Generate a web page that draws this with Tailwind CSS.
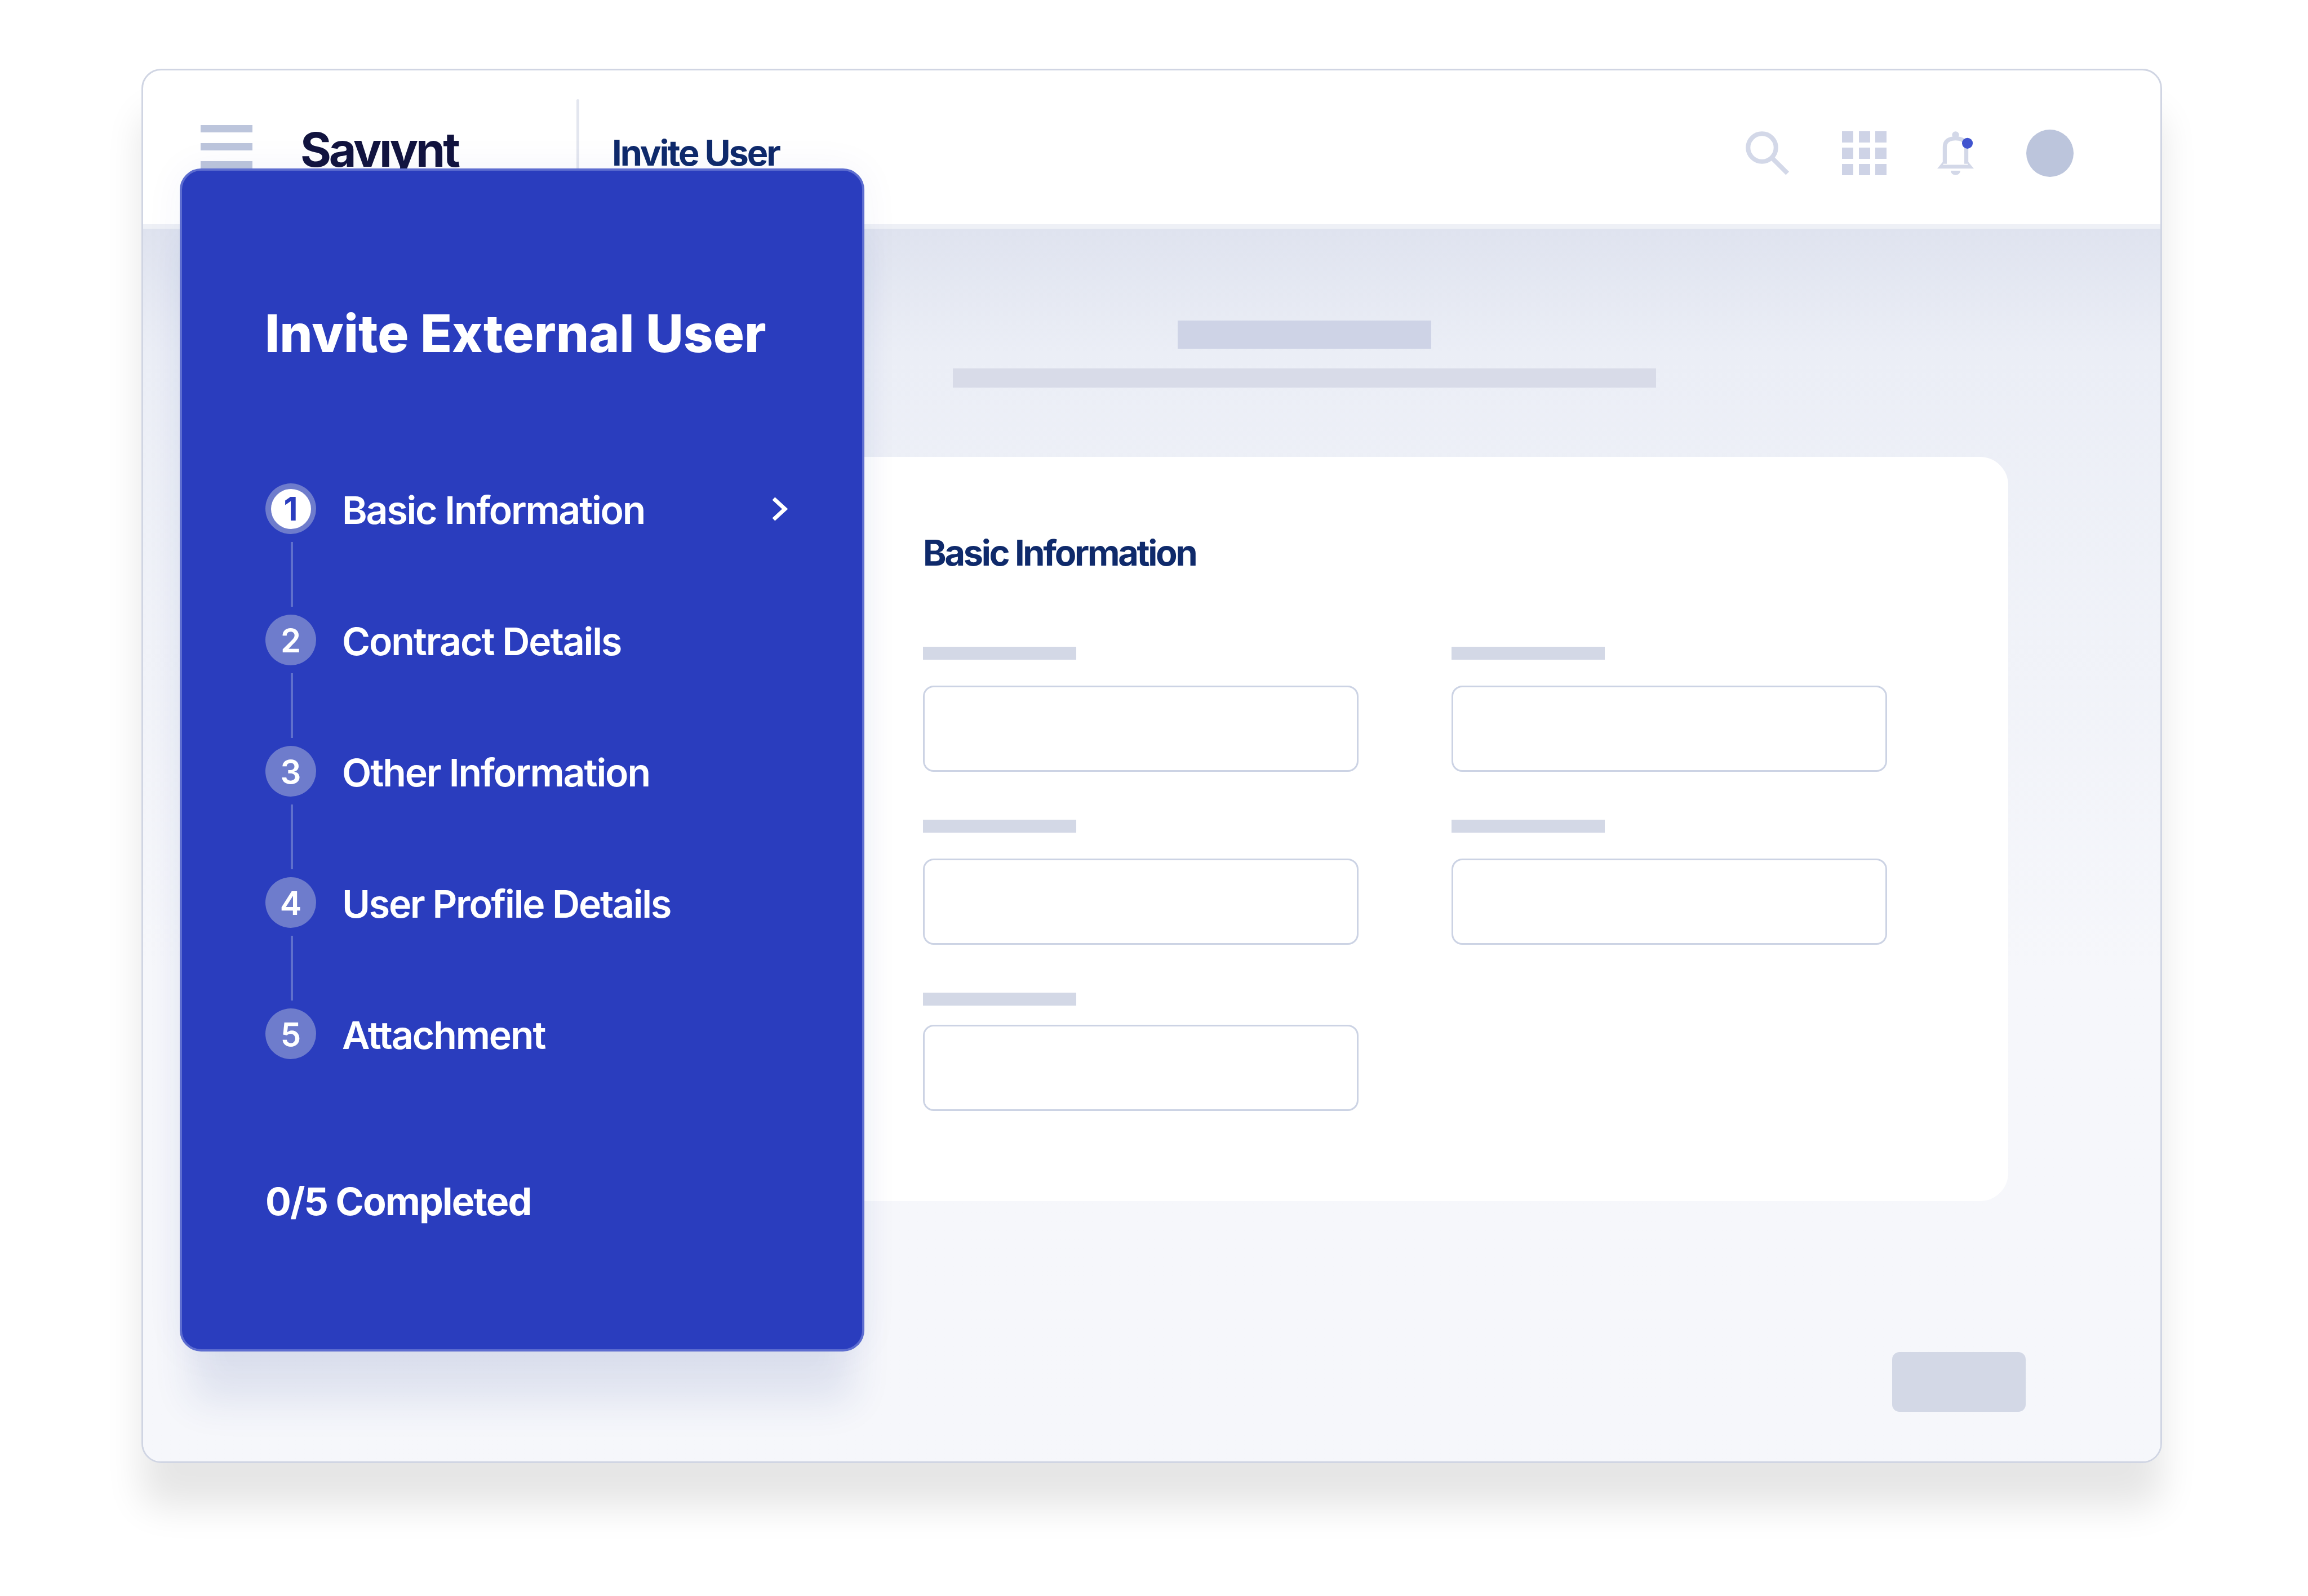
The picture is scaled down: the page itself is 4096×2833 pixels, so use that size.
<!DOCTYPE html>
<html lang="en">
<head>
    <meta charset="UTF-8">
    <title>Invite External User</title>
    <script src="https://cdn.jsdelivr.net/npm/@tailwindcss/browser@4"></script>
</head>
<body class="bg-white w-[4096px] h-[2833px] overflow-hidden pl-[251px] pt-[122px] font-['Inter',sans-serif]">
    <div class="relative w-[3586px] h-[2475px] border-[3px] border-[#d0d5e3] rounded-[35px] bg-white flex flex-col shadow-[0_78px_65px_0_rgba(0,0,0,0.1)]">

        <!-- top bar -->
        <header class="flex items-start h-[281px] shrink-0 pl-[102px] pr-[154px] border-b-[8px] border-[#eef0f6]">
            <div class="flex flex-col gap-[19px] w-[92px] mt-[97px]">
                <div class="h-[13px] bg-[#bcc5dc]"></div>
                <div class="h-[13px] bg-[#bcc5dc]"></div>
                <div class="h-[13px] bg-[#bcc5dc]"></div>
            </div>
            <div class="ml-[85px] w-[490px] mt-[99px] text-[84px] leading-[84px] font-bold tracking-[-0.05em] text-[#12143f]" aria-label="Saviynt">Savıynt</div>
            <div class="w-[5px] h-[230px] mt-[51px] bg-[#e3e6ef] rounded-full"></div>
            <div class="ml-[58px] mt-[115px] text-[63px] leading-[63px] font-bold tracking-[-0.048em] text-[#0f2a6b]">Invite User</div>

            <div class="ml-auto mt-[105px] h-[84px] flex items-center">
                <svg width="78" height="78" viewBox="0 0 82 81" fill="none" stroke="#d3d8e8" stroke-width="8.5">
                    <circle cx="30.5" cy="30" r="26"/>
                    <path d="M50 50 L78 78"/>
                </svg>
                <div class="ml-[93px] grid grid-cols-3 gap-x-[9.5px] gap-y-[9px] w-[79px]">
                    <div class="h-[20px] bg-[#ced3e6]"></div>
                    <div class="h-[20px] bg-[#ced3e6]"></div>
                    <div class="h-[20px] bg-[#ced3e6]"></div>
                    <div class="h-[20px] bg-[#ced3e6]"></div>
                    <div class="h-[20px] bg-[#ced3e6]"></div>
                    <div class="h-[20px] bg-[#ced3e6]"></div>
                    <div class="h-[20px] bg-[#ced3e6]"></div>
                    <div class="h-[20px] bg-[#ced3e6]"></div>
                    <div class="h-[20px] bg-[#ced3e6]"></div>
                </div>
                <svg class="ml-[90px]" width="65" height="78" viewBox="0 0 68 81" fill="none">
                    <circle cx="34" cy="6.5" r="6.5" fill="#d3d8e8"/>
                    <path d="M14 60 V29 Q14 13 34 13 Q54 13 54 29 V60" stroke="#d3d8e8" stroke-width="7.5"/>
                    <path d="M0 69 L11 56 V62 H57 V56 L68 69 Z" fill="#d3d8e8"/>
                    <path d="M25 73 H43 A9 8 0 0 1 25 73 Z" fill="#d3d8e8"/>
                    <circle cx="56" cy="22" r="10" fill="#4054cf"/>
                </svg>
                <div class="ml-[93px] w-[84px] h-[84px] rounded-full bg-[#bcc5dc]"></div>
            </div>
        </header>

        <!-- page content -->
        <main class="flex-1 flex flex-col rounded-b-[32px] bg-linear-to-b from-[#dfe3ef] via-[#ebeef6] via-10% to-[#f6f7fb] to-60%">
            <div class="ml-[817px] w-[2488px] flex flex-col items-center pt-[163px]">
                <div class="w-[450px] h-[50px] bg-[#ced3e6]"></div>
                <div class="w-[1248px] h-[34px] mt-[35px] bg-[#d8dbe8]"></div>
            </div>

            <section class="ml-[817px] mt-[123px] w-[2493px] h-[1321px] bg-white rounded-[50px] pl-[567px] pt-[139px]">
                <h2 class="text-[63px] leading-[63px] font-bold tracking-[-0.052em] text-[#0f2a6b]">Basic Information</h2>
                <div class="mt-[135px] grid grid-cols-[773px_773px] gap-x-[165px] gap-y-[85px]">
                    <div>
                        <div class="w-[272px] h-[23px] bg-[#d3d8e6]"></div>
                        <div class="mt-[46px] h-[153px] border-[3px] border-[#ccd3e4] rounded-[19px]"></div>
                    </div>
                    <div>
                        <div class="w-[272px] h-[23px] bg-[#d3d8e6]"></div>
                        <div class="mt-[46px] h-[153px] border-[3px] border-[#ccd3e4] rounded-[19px]"></div>
                    </div>
                    <div>
                        <div class="w-[272px] h-[23px] bg-[#d3d8e6]"></div>
                        <div class="mt-[46px] h-[153px] border-[3px] border-[#ccd3e4] rounded-[19px]"></div>
                    </div>
                    <div>
                        <div class="w-[272px] h-[23px] bg-[#d3d8e6]"></div>
                        <div class="mt-[46px] h-[153px] border-[3px] border-[#ccd3e4] rounded-[19px]"></div>
                    </div>
                    <div>
                        <div class="w-[272px] h-[23px] bg-[#d3d8e6]"></div>
                        <div class="mt-[34px] h-[153px] border-[3px] border-[#ccd3e4] rounded-[19px]"></div>
                    </div>
                </div>
            </section>

            <div class="ml-auto mr-[239px] mt-[268px] w-[237px] h-[106px] rounded-[13px] bg-[#d3d8e6]"></div>
        </main>

        <!-- wizard panel over the page -->
        <aside class="absolute left-[65px] top-[174px] w-[1215px] h-[2100px] bg-[#2a3dbe] border-[4px] border-[#5d6dd0] rounded-[38px] pl-[148px] pr-[132px] pt-[243px] text-white shadow-[0_110px_70px_-20px_rgba(40,60,150,0.11),0_0_70px_0_rgba(40,60,150,0.05)]">
            <h1 class="text-[92px] leading-[92px] font-extrabold tracking-[0.001em] ml-[-1px] whitespace-nowrap">Invite External User</h1>

            <ol class="mt-[220px]">
                <li class="flex items-center h-[90px]">
                    <div class="w-[90px] h-[90px] rounded-full bg-[#6e7ccc] flex items-center justify-center">
                        <div class="w-[71px] h-[71px] rounded-full bg-white flex items-center justify-center text-[58px] font-bold text-[#2a3dbe]">1</div>
                    </div>
                    <span class="ml-[46px] pt-[4px] text-[68px] font-semibold tracking-[-0.033em]">Basic Information</span>
                    <svg class="ml-auto" width="29" height="43" viewBox="0 0 29 43" fill="none" stroke="#ffffff" stroke-width="7">
                        <path d="M4 3 L24 21.5 L4 40"/>
                    </svg>
                </li>
                <li class="w-[4px] h-[115px] my-[14px] ml-[45px] bg-[#5f70cc]"></li>
                <li class="flex items-center h-[90px]">
                    <div class="w-[90px] h-[90px] pt-[2px] rounded-full bg-[#6e7ccc] flex items-center justify-center text-[58px] font-semibold">2</div>
                    <span class="ml-[46px] pt-[4px] text-[68px] font-semibold tracking-[-0.031em]">Contract Details</span>
                </li>
                <li class="w-[4px] h-[115px] my-[14px] ml-[45px] bg-[#5f70cc]"></li>
                <li class="flex items-center h-[90px]">
                    <div class="w-[90px] h-[90px] pt-[2px] rounded-full bg-[#6e7ccc] flex items-center justify-center text-[58px] font-semibold">3</div>
                    <span class="ml-[46px] pt-[4px] text-[68px] font-semibold tracking-[-0.031em]">Other Information</span>
                </li>
                <li class="w-[4px] h-[115px] my-[14px] ml-[45px] bg-[#5f70cc]"></li>
                <li class="flex items-center h-[90px]">
                    <div class="w-[90px] h-[90px] pt-[2px] rounded-full bg-[#6e7ccc] flex items-center justify-center text-[58px] font-semibold">4</div>
                    <span class="ml-[46px] pt-[4px] text-[68px] font-semibold tracking-[-0.033em]">User Profile Details</span>
                </li>
                <li class="w-[4px] h-[115px] my-[14px] ml-[45px] bg-[#5f70cc]"></li>
                <li class="flex items-center h-[90px]">
                    <div class="w-[90px] h-[90px] pt-[2px] rounded-full bg-[#6e7ccc] flex items-center justify-center text-[58px] font-semibold">5</div>
                    <span class="ml-[46px] pt-[4px] text-[68px] font-semibold tracking-[-0.031em]">Attachment</span>
                </li>
            </ol>

            <p class="mt-[218px] text-[68px] leading-[68px] font-bold tracking-[-0.027em]">0/5 Completed</p>
        </aside>
    </div>
</body>
</html>
